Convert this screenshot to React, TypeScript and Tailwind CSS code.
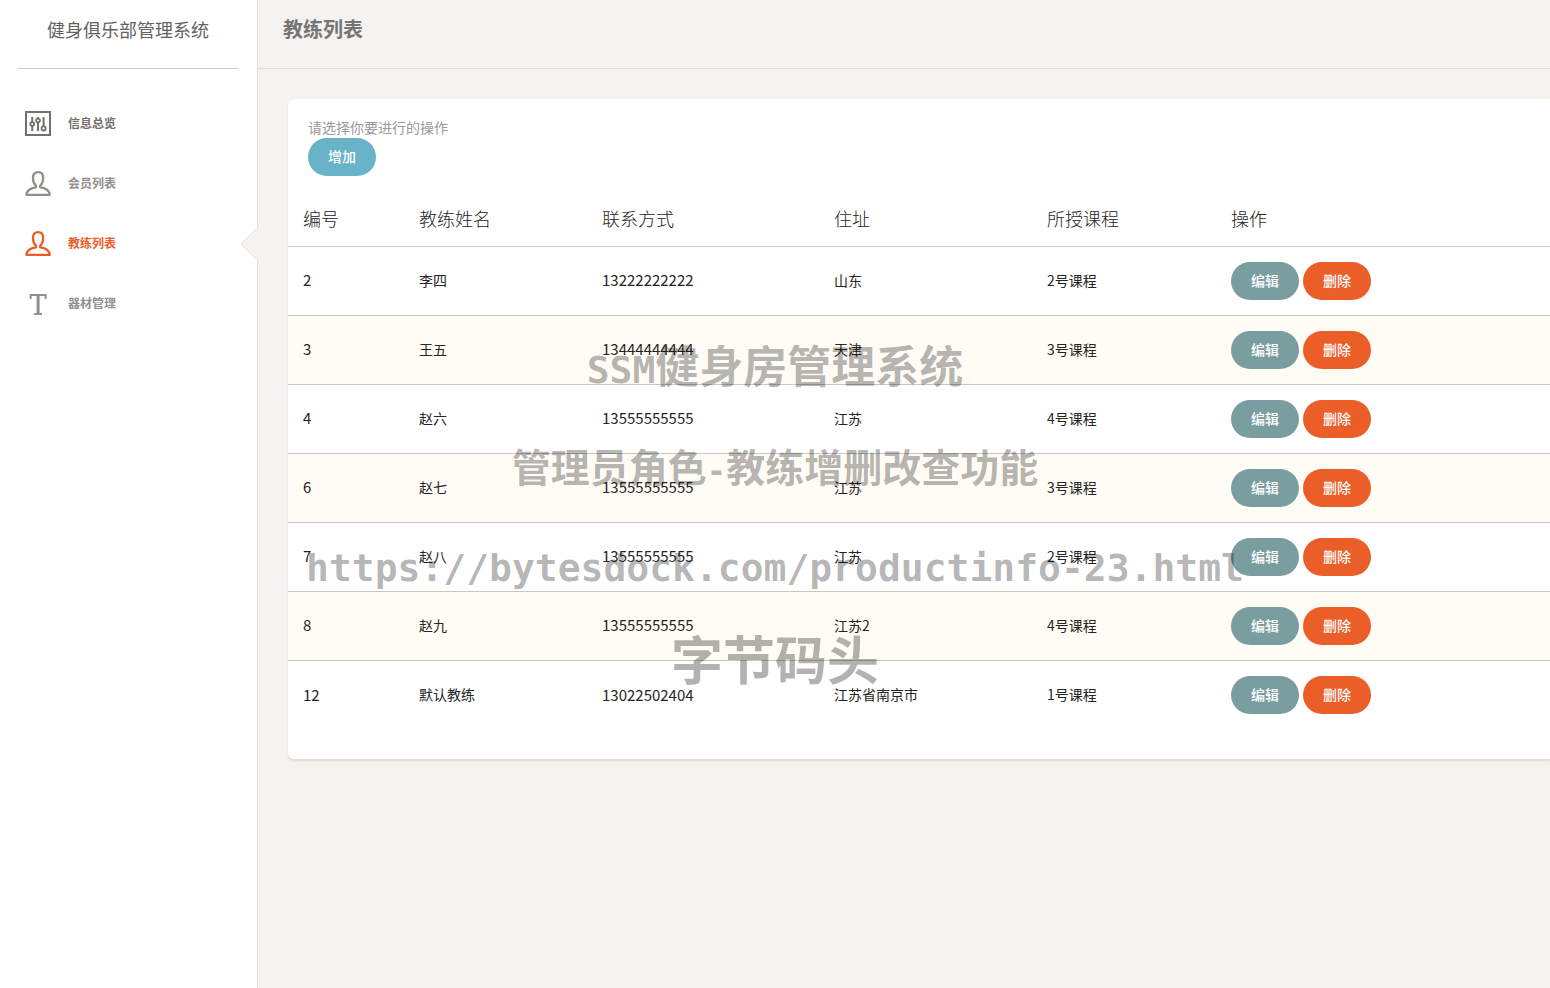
function PanelIcon() {
  return (
    <svg className="size-[26px]" viewBox="0 0 26 26" fill="none" stroke="currentColor" strokeWidth="2">
      <rect x="1" y="2" width="24" height="23" />
      <path d="M7.2 7v5.5M7.2 16V21M13 7v2M13 13v8M18.6 7v9" />
      <g strokeWidth="1.8">
        <circle cx="7.2" cy="14" r="1.9" />
        <circle cx="13" cy="10.5" r="1.9" />
        <circle cx="18.6" cy="18.4" r="2.1" />
      </g>
    </svg>
  );
}

function UserIcon() {
  return (
    <svg className="size-[26px]" viewBox="0 0 26 26" fill="none" stroke="currentColor" strokeWidth="2.3">
      <path
        strokeLinejoin="round"
        d="M11 15.7C9.2 14 8 11 8 7.9 8 4.3 9.9 2.2 13.2 2.2c3.2 0 4.9 2.1 4.9 5.6 0 3.1-.9 6.2-2.9 7.9v1.6c5 .7 9.2 2.6 9.6 7.5H1.4c.4-4.9 4.6-6.8 9.6-7.5z"
      />
    </svg>
  );
}

function TextIcon() {
  return (
    <svg className="size-[26px]" viewBox="0 0 26 26" fill="none" stroke="currentColor" strokeWidth="2">
      <path d="M5.6 9V5h15v4M9.2 24h7.8" />
      <path strokeWidth="3" d="M13.1 5v19" />
    </svg>
  );
}

const menu = [
  { label: "信息总览", icon: PanelIcon, style: "text-[#66615b] opacity-90" },
  { label: "会员列表", icon: UserIcon, style: "text-[#66615b] opacity-70" },
  { label: "教练列表", icon: UserIcon, style: "text-[#eb5e28]", active: true },
  { label: "器材管理", icon: TextIcon, style: "text-[#66615b] opacity-70" },
];

const coaches = [
  { id: 2, name: "李四", phone: "13222222222", address: "山东", course: "2号课程" },
  { id: 3, name: "王五", phone: "13444444444", address: "天津", course: "3号课程" },
  { id: 4, name: "赵六", phone: "13555555555", address: "江苏", course: "4号课程" },
  { id: 6, name: "赵七", phone: "13555555555", address: "江苏", course: "3号课程" },
  { id: 7, name: "赵八", phone: "13555555555", address: "江苏", course: "2号课程" },
  { id: 8, name: "赵九", phone: "13555555555", address: "江苏2", course: "4号课程" },
  { id: 12, name: "默认教练", phone: "13022502404", address: "江苏省南京市", course: "1号课程" },
];

function Sidebar() {
  return (
    <aside className="w-[258px] shrink-0 border-r border-[#dddddd] bg-white">
      <div className="mr-[19px] ml-[18px] flex h-[69px] justify-center border-b border-[#cfcfca] pt-[15px]">
        <a href="#" className="text-lg leading-7 text-[#66615b]">
          健身俱乐部管理系统
        </a>
      </div>
      <nav className="mt-6">
        <ul>
          {menu.map((item) => (
            <li key={item.label} className="relative">
              <a href="#" className={`flex h-[60px] items-center gap-[17px] pl-[25px] text-xs font-semibold ${item.style}`}>
                <item.icon />
                {item.label}
              </a>
              {item.active && (
                <svg className="absolute top-[14px] -right-px h-[34px] w-[18px]" viewBox="0 0 18 34">
                  <path d="M18 0.5 L1 17 L18 33.5 Z" fill="#f4f3ef" />
                  <path d="M17 1 L1 17 L17 33" fill="none" stroke="#e3e2de" />
                </svg>
              )}
            </li>
          ))}
        </ul>
      </nav>
    </aside>
  );
}

function CoachTable() {
  return (
    <table className="w-full table-fixed text-left text-sm text-[#252422]">
      <colgroup>
        <col className="w-[116px]" />
        <col className="w-[183px]" />
        <col className="w-[232px]" />
        <col className="w-[213px]" />
        <col className="w-[184px]" />
        <col />
      </colgroup>
      <thead>
        <tr className="border-b border-[#ccc5b9] text-lg leading-[26px]">
          <th className="p-[15px] font-light">编号</th>
          <th className="p-[15px] font-light">教练姓名</th>
          <th className="p-[15px] font-light">联系方式</th>
          <th className="p-[15px] font-light">住址</th>
          <th className="p-[15px] font-light">所授课程</th>
          <th className="p-[15px] font-light">操作</th>
        </tr>
      </thead>
      <tbody>
        {coaches.map((coach) => (
          <tr key={coach.id} className="h-[69px] border-b border-[#ccc5b9] last:border-b-0 even:bg-[#fffcf5]">
            <td className="px-[15px] pb-0.5 text-[15px]">{coach.id}</td>
            <td className="px-[15px] pb-0.5">{coach.name}</td>
            <td className="px-[15px] pb-0.5 text-[15px]">{coach.phone}</td>
            <td className="px-[15px] pb-0.5">{coach.address}</td>
            <td className="px-[15px] pb-0.5">{coach.course}</td>
            <td className="px-[15px]">
              <div className="flex gap-1">
                <button className="h-[38px] rounded-[20px] bg-[#7a9e9f] px-5 pb-0.5 font-medium text-white">编辑</button>
                <button className="h-[38px] rounded-[20px] bg-[#eb5e28] px-5 pb-0.5 font-medium text-white">删除</button>
              </div>
            </td>
          </tr>
        ))}
      </tbody>
    </table>
  );
}

function Watermark() {
  return (
    <div className="pointer-events-none absolute inset-x-0 top-[342px] flex flex-col items-center leading-none font-bold whitespace-nowrap text-black/30">
      <p className="flex h-11 items-baseline text-[44px]">
        <span className="font-['DejaVu_Sans_Mono',monospace] text-[38px]">SSM</span>健身房管理系统
      </p>
      <p className="mt-[60px] flex h-10 items-baseline text-[39px]">
        管理员角色<span className="font-['DejaVu_Sans_Mono',monospace] text-[32px]">-</span>教练增删改查功能
      </p>
      <p className="mt-[60px] flex h-11 items-center font-['DejaVu_Sans_Mono',monospace] text-[38px]">
        https://bytesdock.com/productinfo-23.html
      </p>
      <p className="mt-[42px] flex h-[52px] items-center text-[52px]">字节码头</p>
    </div>
  );
}

export default function App() {
  return (
    <div className="relative flex min-h-screen overflow-hidden bg-[#f4f3ef] font-['Noto_Sans_CJK_SC',sans-serif]">
      <Sidebar />
      <div className="min-w-0 flex-1">
        <header className="h-[69px] border-b border-[#dddddd] px-[25px] pt-[15px]">
          <h1 className="text-xl leading-7 font-bold text-[#757575]">教练列表</h1>
        </header>
        <main className="pt-[30px] pl-[30px]">
          <section className="rounded-l-md bg-white pb-[29px] shadow-[0_2px_2px_rgba(204,197,185,0.5)]">
            <div className="px-5 pt-[18px] pb-[14px]">
              <p className="mb-px text-sm leading-5 text-[#9a9a9a]">请选择你要进行的操作</p>
              <button className="block h-[38px] rounded-[20px] bg-[#68b3c8] px-5 pb-0.5 text-sm font-medium text-white">增加</button>
            </div>
            <CoachTable />
          </section>
        </main>
      </div>
      <Watermark />
    </div>
  );
}
